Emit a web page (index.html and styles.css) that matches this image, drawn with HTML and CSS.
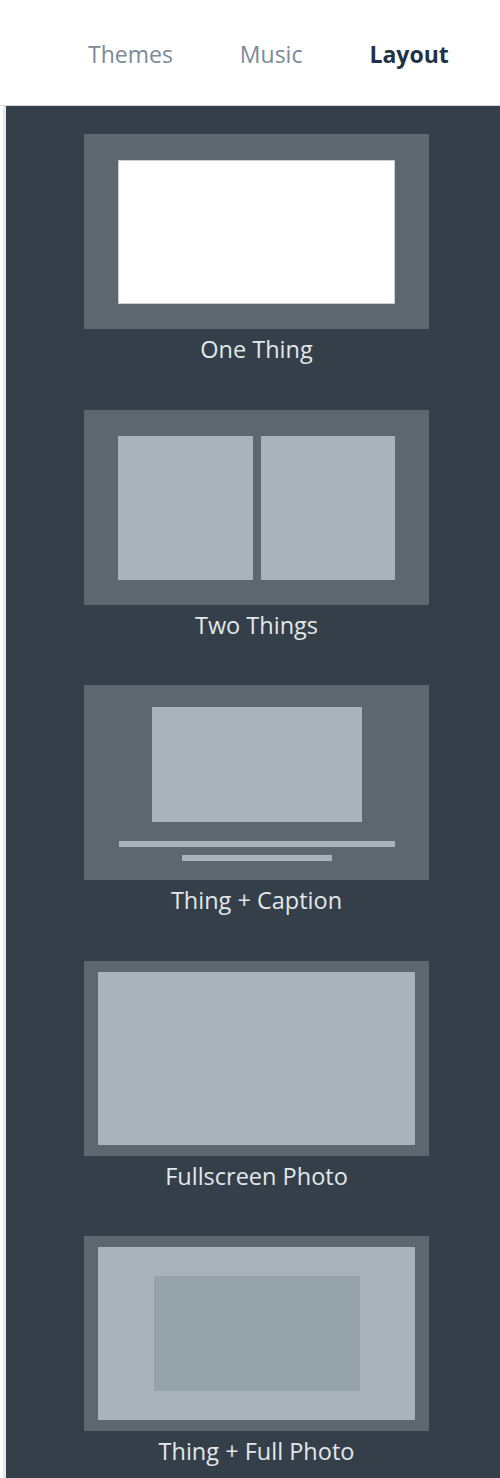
FILE: index.html
```html
<!DOCTYPE html>
<html lang="en">
<head>
  <meta charset="UTF-8" />
  <meta name="viewport" content="width=device-width, initial-scale=1.0" />
  <title>Layout</title>
  <link rel="stylesheet" href="styles.css">
</head>
<body>
  <div class="tabs">
    <div class="tab">Themes</div>
    <div class="tab">Music</div>
    <div class="tab active">Layout</div>
  </div>

  <div class="main">
    <div class="strip"></div>
    <div class="panel">
      <div class="item">
        <div class="card one">
          <div class="blank"></div>
        </div>
        <div class="label">One Thing</div>
      </div>

      <div class="item">
        <div class="card two">
          <div class="box"></div>
          <div class="box"></div>
        </div>
        <div class="label">Two Things</div>
      </div>

      <div class="item">
        <div class="card caption">
          <div class="box thing"></div>
          <div class="line long"></div>
          <div class="line short"></div>
        </div>
        <div class="label">Thing + Caption</div>
      </div>

      <div class="item">
        <div class="card full">
          <div class="box"></div>
        </div>
        <div class="label">Fullscreen Photo</div>
      </div>

      <div class="item">
        <div class="card full">
          <div class="box photo">
            <div class="inner"></div>
          </div>
        </div>
        <div class="label">Thing + Full Photo</div>
      </div>
    </div>
  </div>
</body>
</html>
```

FILE: styles.css
```css
* {
  box-sizing: border-box;
}
body {
  margin: 0;
  font-family: "Open Sans", "Noto Sans", sans-serif;
  background-color: #fff;
  overflow: hidden;
  height: 1478px;
  display: flex;
  flex-direction: column;
}

.tabs {
  display: flex;
  align-items: center;
  gap: 67px;
  height: 106px;
  padding: 3px 0 0 88px;
  border-bottom: 1px solid #d3d6d9;
  font-size: 23px;
  color: #7b8a98;
}

.tab.active {
  color: #1f3346;
  font-weight: 700;
}

.main {
  flex: 1;
  display: flex;
}

.strip {
  width: 6px;
  background: #fff;
  border-right: 3px solid #e7eaed;
}

.panel {
  flex: 1;
  background-color: #353f4a;
  padding: 28px 0 0 78px;
  display: flex;
  flex-direction: column;
  gap: 40.5px;
}

.item {
  width: 345px;
  display: flex;
  flex-direction: column;
}

.card {
  height: 195px;
  background-color: #5e6670;
  display: flex;
}

.label {
  height: 40px;
  line-height: 40px;
  text-align: center;
  font-size: 23.5px;
  color: #e2e7eb;
}

.box {
  background-color: #aab3bb;
}

.one {
  padding: 26px 34px 25px;
}

.blank {
  flex: 1;
  background: #fff;
  border: 1px solid #c9cdd1;
}

.two {
  padding: 26px 34px 25px;
  gap: 8px;
}

.two .box {
  flex: 1;
}

.caption {
  flex-direction: column;
  align-items: center;
  padding-top: 22px;
}

.thing {
  width: 210px;
  height: 115px;
  margin-bottom: 19px;
}

.line {
  height: 6px;
  background-color: #aab3bb;
}

.long {
  width: 276px;
  margin-bottom: 8px;
}

.short {
  width: 150px;
}

.full {
  padding: 11px 14px;
}

.full .box {
  flex: 1;
}

.photo {
  display: flex;
  align-items: center;
  justify-content: center;
}

.inner {
  width: 206px;
  height: 115px;
  background-color: #97a3ab;
}
```
